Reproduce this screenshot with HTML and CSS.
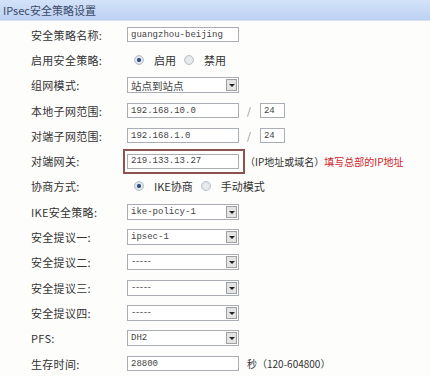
FILE: index.html
```html
<!DOCTYPE html>
<html lang="zh-CN">
<head>
    <meta charset="UTF-8">
    <title>IPsec安全策略设置</title>
    <link rel="stylesheet" href="styles.css">
</head>
<body>

<div class="title-bar">IPsec安全策略设置</div>

<div class="form">
    <div class="label">安全策略名称:</div>
    <div class="field"><span class="box text">guangzhou-beijing</span></div>

    <div class="label">启用安全策略:</div>
    <div class="field">
        <span class="radio on"></span><span class="opt">启用</span>
        <span class="radio"></span><span class="opt">禁用</span>
    </div>

    <div class="label">组网模式:</div>
    <div class="field"><span class="box select cjk">站点到站点<span class="arrow"></span></span></div>

    <div class="label">本地子网范围:</div>
    <div class="field">
        <span class="box text">192.168.10.0</span>
        <span class="slash">/</span>
        <span class="box mask">24</span>
    </div>

    <div class="label">对端子网范围:</div>
    <div class="field">
        <span class="box text">192.168.1.0</span>
        <span class="slash">/</span>
        <span class="box mask">24</span>
    </div>

    <div class="label">对端网关:</div>
    <div class="field">
        <span class="mark"><span class="box text">219.133.13.27</span></span>
        <span class="hint">（IP地址或域名）</span>
        <span class="note">填写总部的IP地址</span>
    </div>

    <div class="label">协商方式:</div>
    <div class="field">
        <span class="radio on"></span><span class="opt">IKE协商</span>
        <span class="radio"></span><span class="opt">手动模式</span>
    </div>

    <div class="label">IKE安全策略:</div>
    <div class="field"><span class="box select">ike-policy-1<span class="arrow"></span></span></div>

    <div class="label">安全提议一:</div>
    <div class="field"><span class="box select">ipsec-1<span class="arrow"></span></span></div>

    <div class="label">安全提议二:</div>
    <div class="field"><span class="box select dash">-----<span class="arrow"></span></span></div>

    <div class="label">安全提议三:</div>
    <div class="field"><span class="box select dash">-----<span class="arrow"></span></span></div>

    <div class="label">安全提议四:</div>
    <div class="field"><span class="box select dash">-----<span class="arrow"></span></span></div>

    <div class="label">PFS:</div>
    <div class="field"><span class="box select">DH2<span class="arrow"></span></span></div>

    <div class="label">生存时间:</div>
    <div class="field">
        <span class="box text">28800</span>
        <span class="hint life">秒（120-604800）</span>
    </div>
</div>

</body>
</html>
```

FILE: styles.css
```css
body {
    margin: 0;
    background: #fdfdfc;
    font-family: "Noto Sans CJK SC", "DejaVu Sans", sans-serif;
    color: #333;
}

.title-bar {
    height: 20px;
    line-height: 20px;
    padding-left: 3px;
    font-size: 11px;
    color: #3b4a66;
    background: linear-gradient(#d3e2f8, #bcd1f3);
    border-bottom: 1px solid #d8e2ee;
}

.form {
    display: grid;
    grid-template-columns: 96px 1fr;
    grid-auto-rows: 25.3px;
    align-items: center;
    padding: 1px 0 0 31px;
}

.label {
    font-size: 11px;
    color: #333;
    letter-spacing: 0.3px;
}

.field {
    display: flex;
    align-items: center;
    font-size: 11px;
}

.box {
    display: inline-flex;
    align-items: center;
    box-sizing: border-box;
    height: 15px;
    border: 1px solid #a9aeb5;
    background: #fff;
    padding-left: 3px;
    font-family: "Liberation Mono", "DejaVu Sans Mono", monospace;
    font-size: 9px;
    color: #444;
}

.text {
    width: 112px;
}

.select {
    position: relative;
    width: 112px;
    height: 16px;
}

.cjk {
    font-family: "Noto Sans CJK SC", sans-serif;
    font-size: 10.5px;
}

.dash {
    letter-spacing: -1.5px;
}

.arrow {
    position: absolute;
    right: 1px;
    top: 1px;
    width: 11px;
    height: 12px;
    box-sizing: border-box;
    border: 1px solid #a0a0a0;
    background: #e4e4e4;
}

.arrow::after {
    content: "";
    position: absolute;
    left: 2px;
    top: 4px;
    border-left: 3px solid transparent;
    border-right: 3px solid transparent;
    border-top: 3px solid #222;
}

.mask {
    width: 25px;
}

.slash {
    margin: 0 9px 0 8px;
    color: #888;
    font-size: 10px;
}

.mark {
    display: inline-flex;
    margin-left: -4px;
    padding: 3px 4px 3px 2px;
    border: 2px solid #8e5252;
}

.hint {
    color: #333;
    font-size: 10px;
}

.life {
    margin-left: 8px;
}

.note {
    color: #d0242b;
    font-size: 10px;
}

.radio {
    display: inline-block;
    box-sizing: border-box;
    width: 10px;
    height: 10px;
    margin: 0 10px 0 6px;
    border-radius: 50%;
    border: 1px solid #b9c2cc;
    background: radial-gradient(circle, #e8ebee 40%, #d4d8dc 100%);
}

.radio.on {
    margin-left: 7px;
    background: radial-gradient(circle, #24406e 0, #3a5b8c 32%, #e3e8ee 42%, #cfd6de 100%);
}

.opt {
    margin-right: 2px;
}
```
